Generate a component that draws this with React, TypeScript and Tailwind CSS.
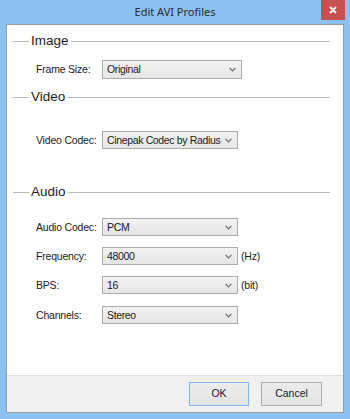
import React from "react";

type SelectProps = { value: string; width: string; height?: string };

const FakeSelect = ({ value, width, height = "h-[18px]" }: SelectProps) => {
  return (
    <div
      className={`${width} ${height} flex items-center border border-[#acacac] bg-gradient-to-b from-[#f2f2f2] to-[#e6e6e6] pl-[4px] pr-[5px]`}
    >
      <span className="flex-1 whitespace-nowrap text-[10.5px] tracking-[-0.35px] text-[#1a1a1a] leading-none">
        {value}
      </span>
      <svg width="7" height="5" viewBox="0 0 7 5">
        <path d="M0.5 0.8 L3.5 3.8 L6.5 0.8" fill="none" stroke="#6d6d6d" strokeWidth="1.2" />
      </svg>
    </div>
  );
};

const SectionHeader = ({ title, mt }: { title: string; mt: string }) => {
  return (
    <div className={`flex items-center h-[20px] ${mt}`}>
      <div className="w-[16px] h-px bg-[#b9b9b9]" />
      <span className="mx-[2px] text-[13.5px] text-[#1e1e1e] leading-none">{title}</span>
      <div className="flex-1 h-px bg-[#b9b9b9]" />
    </div>
  );
};

type RowProps = {
  label: string;
  value: string;
  width: string;
  mt: string;
  unit?: string;
  height?: string;
};

const Row = ({ label, value, width, mt, unit, height }: RowProps) => {
  return (
    <div className={`flex items-center leading-none ${mt}`}>
      <span className="w-[66px] ml-[23px] whitespace-nowrap text-[10.5px] tracking-[-0.2px] text-[#1a1a1a]">
        {label}
      </span>
      <FakeSelect value={value} width={width} height={height} />
      {unit && (
        <span className="ml-[3px] text-[10.5px] tracking-[-0.2px] text-[#1a1a1a]">{unit}</span>
      )}
    </div>
  );
};

const App = () => {
  return (
    <div
      className="w-[350px] h-[419px] bg-[#8cc1f1] flex flex-col"
      style={{ fontFamily: '"Liberation Sans", Arial, sans-serif' }}
    >
      <div className="relative h-[24px] flex items-center justify-center">
        <span
          className="text-[11px] text-[#2b2b2b]"
          style={{ fontFamily: '"Noto Sans", sans-serif' }}
        >
          Edit AVI Profiles
        </span>
        <div className="absolute right-[5px] top-0 w-[24px] h-[20px] bg-[#c75050] flex items-center justify-center">
          <svg width="8" height="8" viewBox="0 0 8 8">
            <path d="M1 1 L7 7 M7 1 L1 7" stroke="#ffffff" strokeWidth="1.8" />
          </svg>
        </div>
      </div>
      <div className="flex-1 mx-[6px] mb-[6px] border border-[#9d9d9d] flex flex-col">
        <div className="flex-1 bg-white pl-[6px] pr-[13px] pt-[6px]">
          <SectionHeader title="Image" mt="mt-0" />
          <Row label="Frame Size:" value="Original" width="w-[140px]" mt="mt-[9px]" height="h-[19px]" />
          <SectionHeader title="Video" mt="mt-[8px]" />
          <Row label="Video Codec:" value="Cinepak Codec by Radius" width="w-[136px]" mt="mt-[24px]" />
          <SectionHeader title="Audio" mt="mt-[33px]" />
          <Row label="Audio Codec:" value="PCM" width="w-[136px]" mt="mt-[16px]" />
          <Row label="Frequency:" value="48000" width="w-[136px]" mt="mt-[11px]" unit="(Hz)" />
          <Row label="BPS:" value="16" width="w-[136px]" mt="mt-[11px]" unit="(bit)" />
          <Row label="Channels:" value="Stereo" width="w-[136px]" mt="mt-[12px]" />
        </div>
        <div className="h-[37px] border-t border-[#dfdfdf] bg-[#f0f0f0] flex items-center justify-end gap-[12px] pr-[21px]">
          <button className="w-[60px] h-[24px] border border-[#7eb4ea] bg-gradient-to-b from-[#ececec] to-[#e3e3e3] text-[10.5px] text-[#1a1a1a]">
            OK
          </button>
          <button className="w-[61px] h-[24px] border border-[#adadad] bg-gradient-to-b from-[#ececec] to-[#e3e3e3] text-[10.5px] text-[#1a1a1a]">
            Cancel
          </button>
        </div>
      </div>
    </div>
  );
};

export default App;
